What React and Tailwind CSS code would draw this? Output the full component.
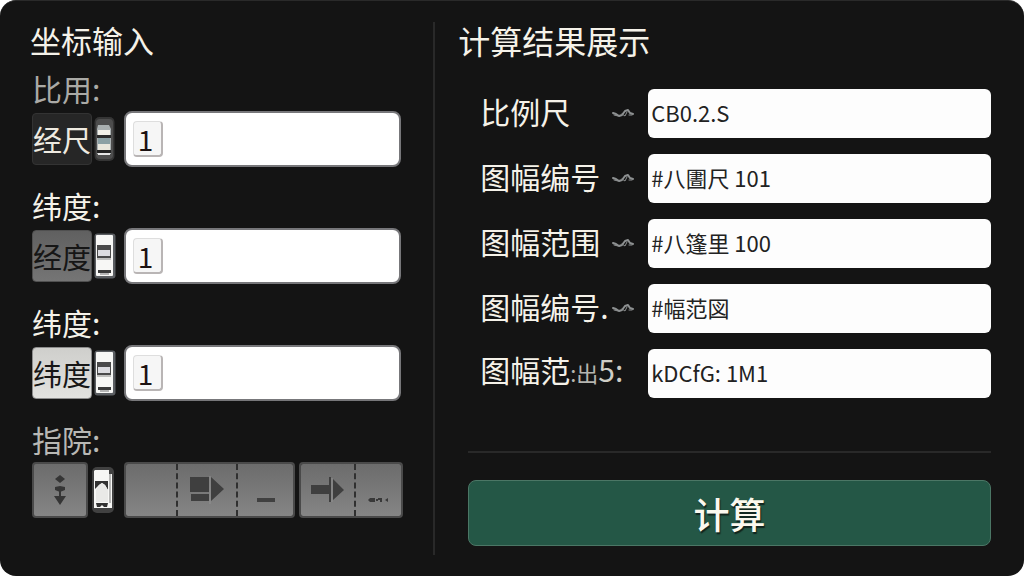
import React, { useState } from 'react';

const Handle = ({ variant }) => {
  if (variant === 'dark') {
    return (
      <svg viewBox="0 0 22 46" className="w-[22px] h-[46px]" aria-hidden="true">
        <rect x="0.5" y="1" width="20" height="44" rx="5" fill="#353535" />
        <rect x="2" y="3" width="17" height="40" rx="4" fill="#4d4d4d" />
        <path d="M4 9h11l2 4v25H3V13z" fill="#a9afb0" />
        <rect x="4" y="14" width="12" height="5" fill="#f2f0e8" />
        <rect x="3" y="19" width="14" height="3" fill="#2b2b2b" />
        <rect x="4" y="22" width="12" height="6" fill="#8ba0a4" />
        <rect x="4" y="28" width="12" height="6" fill="#e8e6dc" />
        <rect x="3" y="34" width="14" height="3" fill="#222" />
        <rect x="4" y="37" width="12" height="2" fill="#e5e5e5" />
      </svg>
    );
  }
  if (variant === 'car') {
    return (
      <svg viewBox="0 0 22 46" className="w-[22px] h-[46px]" aria-hidden="true">
        <rect x="0" y="0" width="22" height="46" rx="5" fill="#414141" />
        <path d="M3 3h14v4h3v34H2V4z" fill="#f7f7f5" />
        <path d="M18 7v29" stroke="#777" strokeWidth="1" />
        <path d="M3 14h13v9l-3-5-3-2-3 2-4 4z" fill="#333" />
        <path d="M4 23l3-5 3-2 3 2 3 5v12H4z" fill="#e9e9e7" />
        <path d="M4 36h12l-1 4h-3l-2-2-2 2H5z" fill="#333" />
      </svg>
    );
  }
  return (
    <svg viewBox="0 0 22 46" className="w-[22px] h-[46px]" aria-hidden="true">
      <rect x="0.5" y="0.5" width="21" height="45" rx="3" fill="#5b5e62" />
      <rect x="2" y="2" width="17" height="41" rx="1" fill="#f7f7f5" />
      <rect x="3" y="12" width="14" height="13" fill="#4a4a4a" />
      <rect x="4" y="17" width="12" height="6" fill="#dcdce0" />
      <rect x="3" y="25" width="14" height="2" fill="#bfbfbd" />
      <rect x="4" y="37" width="13" height="3" fill="#3a3a3a" />
      <rect x="6" y="40" width="9" height="2" fill="#b5b5b5" />
    </svg>
  );
};

const Wave = () => (
  <svg viewBox="0 0 22 12" className="w-[22px] h-3" fill="none" stroke="#8d9091" strokeLinejoin="round" strokeLinecap="round" aria-hidden="true">
    <path d="M1 5l3 1 3 2 3-1 3-4 3-1 2 3 3 1" strokeWidth="2" />
    <path d="M2 7l4 1M10 6l3 2 2-4M17 7l3 0" strokeWidth="1" />
  </svg>
);

const inputs = [
  {
    id: 'scale',
    label: '比用:',
    labelClass: 'text-[#aaaaa6]',
    tag: '经尺',
    tagClass: 'bg-[#262626] border-[#333] text-[#eeeae0]',
    handle: 'dark',
  },
  {
    id: 'longitude',
    label: '纬度:',
    labelClass: 'text-[#f5f2e9]',
    tag: '经度',
    tagClass: 'bg-linear-to-b from-[#606060] to-[#757575] border-[#505050] text-[#161616]',
    handle: 'light',
  },
  {
    id: 'latitude',
    label: '纬度:',
    labelClass: 'text-[#f5f2e9]',
    tag: '纬度',
    tagClass: 'bg-linear-to-b from-[#cfcfcc] to-[#e2e2df] border-[#8c8c8c] text-[#161616]',
    handle: 'light',
  },
];

const results = [
  { id: 'r1', label: '比例尺', wave: true, value: 'CB0.2.S' },
  { id: 'r2', label: '图幅编号', wave: true, value: '#八圕尺 101' },
  { id: 'r3', label: '图幅范围', wave: true, value: '#八篷里 100' },
  { id: 'r4', label: '图幅编号.', wave: true, value: '#幅范図' },
  { id: 'r5', label: '图幅范', partial: ':出', suffix: '5:', value: 'kDCfG: 1M1' },
];

const toolClass = 'flex items-center justify-center bg-linear-to-b from-[#6c6c6c] to-[#858585]';

const App = () => {
  const [values, setValues] = useState({ scale: '1', longitude: '1', latitude: '1' });

  return (
    <div className="min-h-screen bg-white font-['Noto_Sans_CJK_SC',sans-serif]">
      <main className="min-h-screen grid grid-cols-[11fr_15fr] rounded-2xl bg-[#141414] border-t border-[#2a2a2a] py-[21px] text-[#f5f2e9]">

        {/* Coordinate input */}
        <section className="pt-0.5 pl-8 pr-8">
          <h2 className="-ml-0.5 text-[31px] leading-8">坐标输入</h2>

          <div className="mt-4 flex flex-col gap-[22px]">
            {inputs.map(item => (
              <div key={item.id} className="flex flex-col gap-[7px]">
                <label htmlFor={item.id} className={`text-[30px] leading-8 ${item.labelClass}`}>{item.label}</label>
                <div className="flex items-center">
                  <button type="button" className={`w-[60px] h-[52px] rounded-sm border text-[29px] leading-8 whitespace-nowrap flex items-center justify-center ${item.tagClass}`}>
                    {item.tag}
                  </button>
                  <button type="button" aria-label="调整" className="ml-0.5 w-[22px]">
                    <Handle variant={item.handle} />
                  </button>
                  <div className="ml-2 h-14 flex-1 min-w-0 rounded-lg border-2 border-[#77777a] bg-white flex items-center pl-[7px]">
                    <input
                      id={item.id}
                      value={values[item.id]}
                      onChange={(e) => setValues({ ...values, [item.id]: e.target.value })}
                      className="w-[30px] h-9 pr-1 rounded-sm bg-[#f6f6f6] border border-r-2 border-b-2 border-[#dedede] border-r-[#b9b5b5] border-b-[#b9b5b5] text-center text-[28px] leading-8 text-[#1c1212] outline-none"
                    />
                  </div>
                </div>
              </div>
            ))}

            {/* Tool buttons */}
            <div className="flex flex-col gap-[7px]">
              <p className="text-[30px] leading-8 text-[#b8b8b4]">指院:</p>
              <div className="flex items-center">
                <button type="button" aria-label="排序" className={`w-14 h-14 rounded-sm border-2 border-[#4a4a4a] ${toolClass}`}>
                  <svg viewBox="0 0 16 32" className="w-4 h-8" fill="#353535">
                    <path d="M3 5l5-4 5 4-5 4zM3 13l5-1 5 1v3l-5 2-5-2zM7 16h2v7H7zM2 22h12l-6 9z" />
                  </svg>
                </button>
                <button type="button" aria-label="调整" className="ml-1 w-[22px]">
                  <Handle variant="car" />
                </button>
                <div className="ml-2.5 -mr-0.5 flex-1 min-w-0 h-14 grid grid-cols-[171fr_104fr] gap-1">
                  <div className="grid grid-cols-[51fr_64fr_56fr] rounded-sm border-2 border-[#4a4a4a] overflow-hidden">
                    <button type="button" aria-label="空白" className={toolClass} />
                    <button type="button" aria-label="移动" className={`border-x-2 border-dashed border-[#303030] ${toolClass}`}>
                      <svg viewBox="0 0 36 28" className="w-9 h-7" fill="#3f3f3f">
                        <path d="M1 1h19v15H1zM2 18h18v7H2zM22 1l13 12-13 12z" />
                        <path d="M21 0v28" stroke="#929292" strokeWidth="1" />
                      </svg>
                    </button>
                    <button type="button" aria-label="减少" className={toolClass}>
                      <svg viewBox="0 0 18 28" className="w-[18px] h-7"><path d="M0 24h18" stroke="#404040" strokeWidth="4" /></svg>
                    </button>
                  </div>
                  <div className="grid grid-cols-[57fr_47fr] rounded-sm border-2 border-[#4a4a4a] overflow-hidden">
                    <button type="button" aria-label="下一步" className={`border-r-2 border-dashed border-[#303030] ${toolClass}`}>
                      <svg viewBox="0 0 34 28" className="w-[34px] h-7" fill="#3f3f3f">
                        <path d="M0 9h18v9H0zM18 1h2v25h-2zM22 3l11 11-11 10z" />
                        <path d="M21 2v24" stroke="#929292" strokeWidth="1" />
                      </svg>
                    </button>
                    <button type="button" aria-label="更多" className={toolClass}>
                      <svg viewBox="0 0 22 28" className="w-[22px] h-7" fill="#383838">
                        <path d="M0 24l2-2h5v4H2zM8 23h2v2H8zM10 22h4v4h-2v-2h-2zM17 24l3-2v4z" />
                      </svg>
                    </button>
                  </div>
                </div>
              </div>
            </div>
          </div>
        </section>

        {/* Results */}
        <section className="pt-0.5 pl-[23px] pr-[33px] border-l-2 border-[#292929]">
          <h2 className="text-[32px] leading-8">计算结果展示</h2>

          <div className="mt-[33px] pl-[22px] flex flex-col gap-4">
            {results.map(item => (
              <div key={item.id} className="flex items-center">
                <label htmlFor={item.id} className="w-[168px] pr-3.5 flex items-center justify-between text-[30px] leading-8 whitespace-nowrap">
                  <span className="pb-1.5">
                    {item.label}
                    {item.partial && <span className="text-[22px] text-[#b5b5b0]">{item.partial}</span>}
                    {item.suffix && <span className="text-[#cfcdc6]">{item.suffix}</span>}
                  </span>
                  {item.wave && <Wave />}
                </label>
                <input
                  id={item.id}
                  readOnly
                  value={item.value}
                  className="flex-1 min-w-0 h-[49px] rounded-md bg-[#fdfdfd] px-[3px] pb-1 text-[22px] leading-8 text-[#222] outline-none"
                />
              </div>
            ))}
          </div>

          <div className="ml-2.5 mt-[53px] border-t-2 border-[#292929]" />
          <div className="ml-2.5 mt-[27px]">
            <button type="button" className="w-full h-[66px] rounded-lg border border-[#4b7665] bg-[#245746] text-4xl font-medium text-[#fbf8ee] [text-shadow:1px_2px_1px_#12241d]">
              计算
            </button>
          </div>
        </section>
      </main>
    </div>
  );
};

export default App;
